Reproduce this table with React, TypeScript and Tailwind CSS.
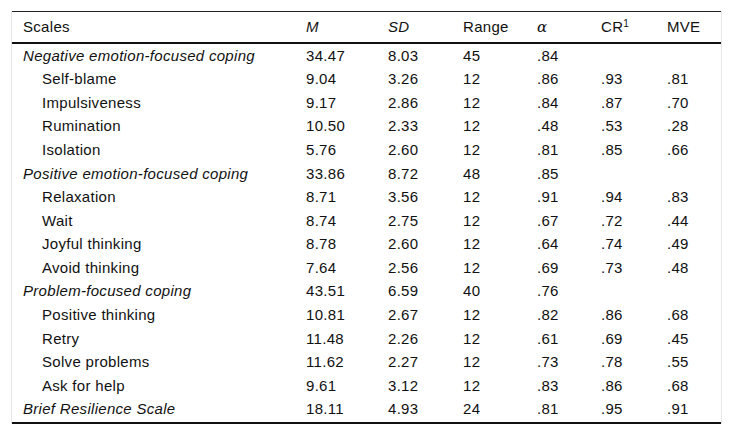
const ROWS: { label: string; group?: boolean; values: string[] }[] = [
  { label: "Negative emotion-focused coping", group: true, values: ["34.47", "8.03", "45", ".84", "", ""] },
  { label: "Self-blame", values: ["9.04", "3.26", "12", ".86", ".93", ".81"] },
  { label: "Impulsiveness", values: ["9.17", "2.86", "12", ".84", ".87", ".70"] },
  { label: "Rumination", values: ["10.50", "2.33", "12", ".48", ".53", ".28"] },
  { label: "Isolation", values: ["5.76", "2.60", "12", ".81", ".85", ".66"] },
  { label: "Positive emotion-focused coping", group: true, values: ["33.86", "8.72", "48", ".85", "", ""] },
  { label: "Relaxation", values: ["8.71", "3.56", "12", ".91", ".94", ".83"] },
  { label: "Wait", values: ["8.74", "2.75", "12", ".67", ".72", ".44"] },
  { label: "Joyful thinking", values: ["8.78", "2.60", "12", ".64", ".74", ".49"] },
  { label: "Avoid thinking", values: ["7.64", "2.56", "12", ".69", ".73", ".48"] },
  { label: "Problem-focused coping", group: true, values: ["43.51", "6.59", "40", ".76", "", ""] },
  { label: "Positive thinking", values: ["10.81", "2.67", "12", ".82", ".86", ".68"] },
  { label: "Retry", values: ["11.48", "2.26", "12", ".61", ".69", ".45"] },
  { label: "Solve problems", values: ["11.62", "2.27", "12", ".73", ".78", ".55"] },
  { label: "Ask for help", values: ["9.61", "3.12", "12", ".83", ".86", ".68"] },
  { label: "Brief Resilience Scale", group: true, values: ["18.11", "4.93", "24", ".81", ".95", ".91"] },
];

const GRID = "grid grid-cols-[294px_82px_75px_74px_64px_66px_1fr]";

export default function App() {
  return (
    <div
      className="min-h-screen w-full bg-white pt-[11px] px-[11px] text-[#111]"
      style={{ fontFamily: '"Liberation Sans", Arial, sans-serif' }}
    >
      <div className="w-[711px] border-x border-[#e6e6e6] text-[15px] tracking-[0.3px]">
        {/* Header */}
        <div className={`${GRID} h-[33px] items-center border-t border-b-2 border-t-[#222] border-b-[#111]`}>
          <div className="pl-[11px]">Scales</div>
          <div className="italic">M</div>
          <div className="italic">SD</div>
          <div>Range</div>
          <div className="italic" style={{ fontFamily: '"DejaVu Serif", serif' }}>α</div>
          <div>
            CR<span className="relative -top-[5px] text-[10px]">1</span>
          </div>
          <div>MVE</div>
        </div>

        {/* Body */}
        <div className="border-b-2 border-[#111]">
          {ROWS.map((r) => (
            <div key={r.label} className={`${GRID} h-[23.6px] items-center`}>
              <div className={r.group ? "pl-[11px] italic" : "pl-[30px]"}>{r.label}</div>
              {r.values.map((v, i) => (
                <div key={i}>{v}</div>
              ))}
            </div>
          ))}
        </div>
      </div>
    </div>
  );
}
